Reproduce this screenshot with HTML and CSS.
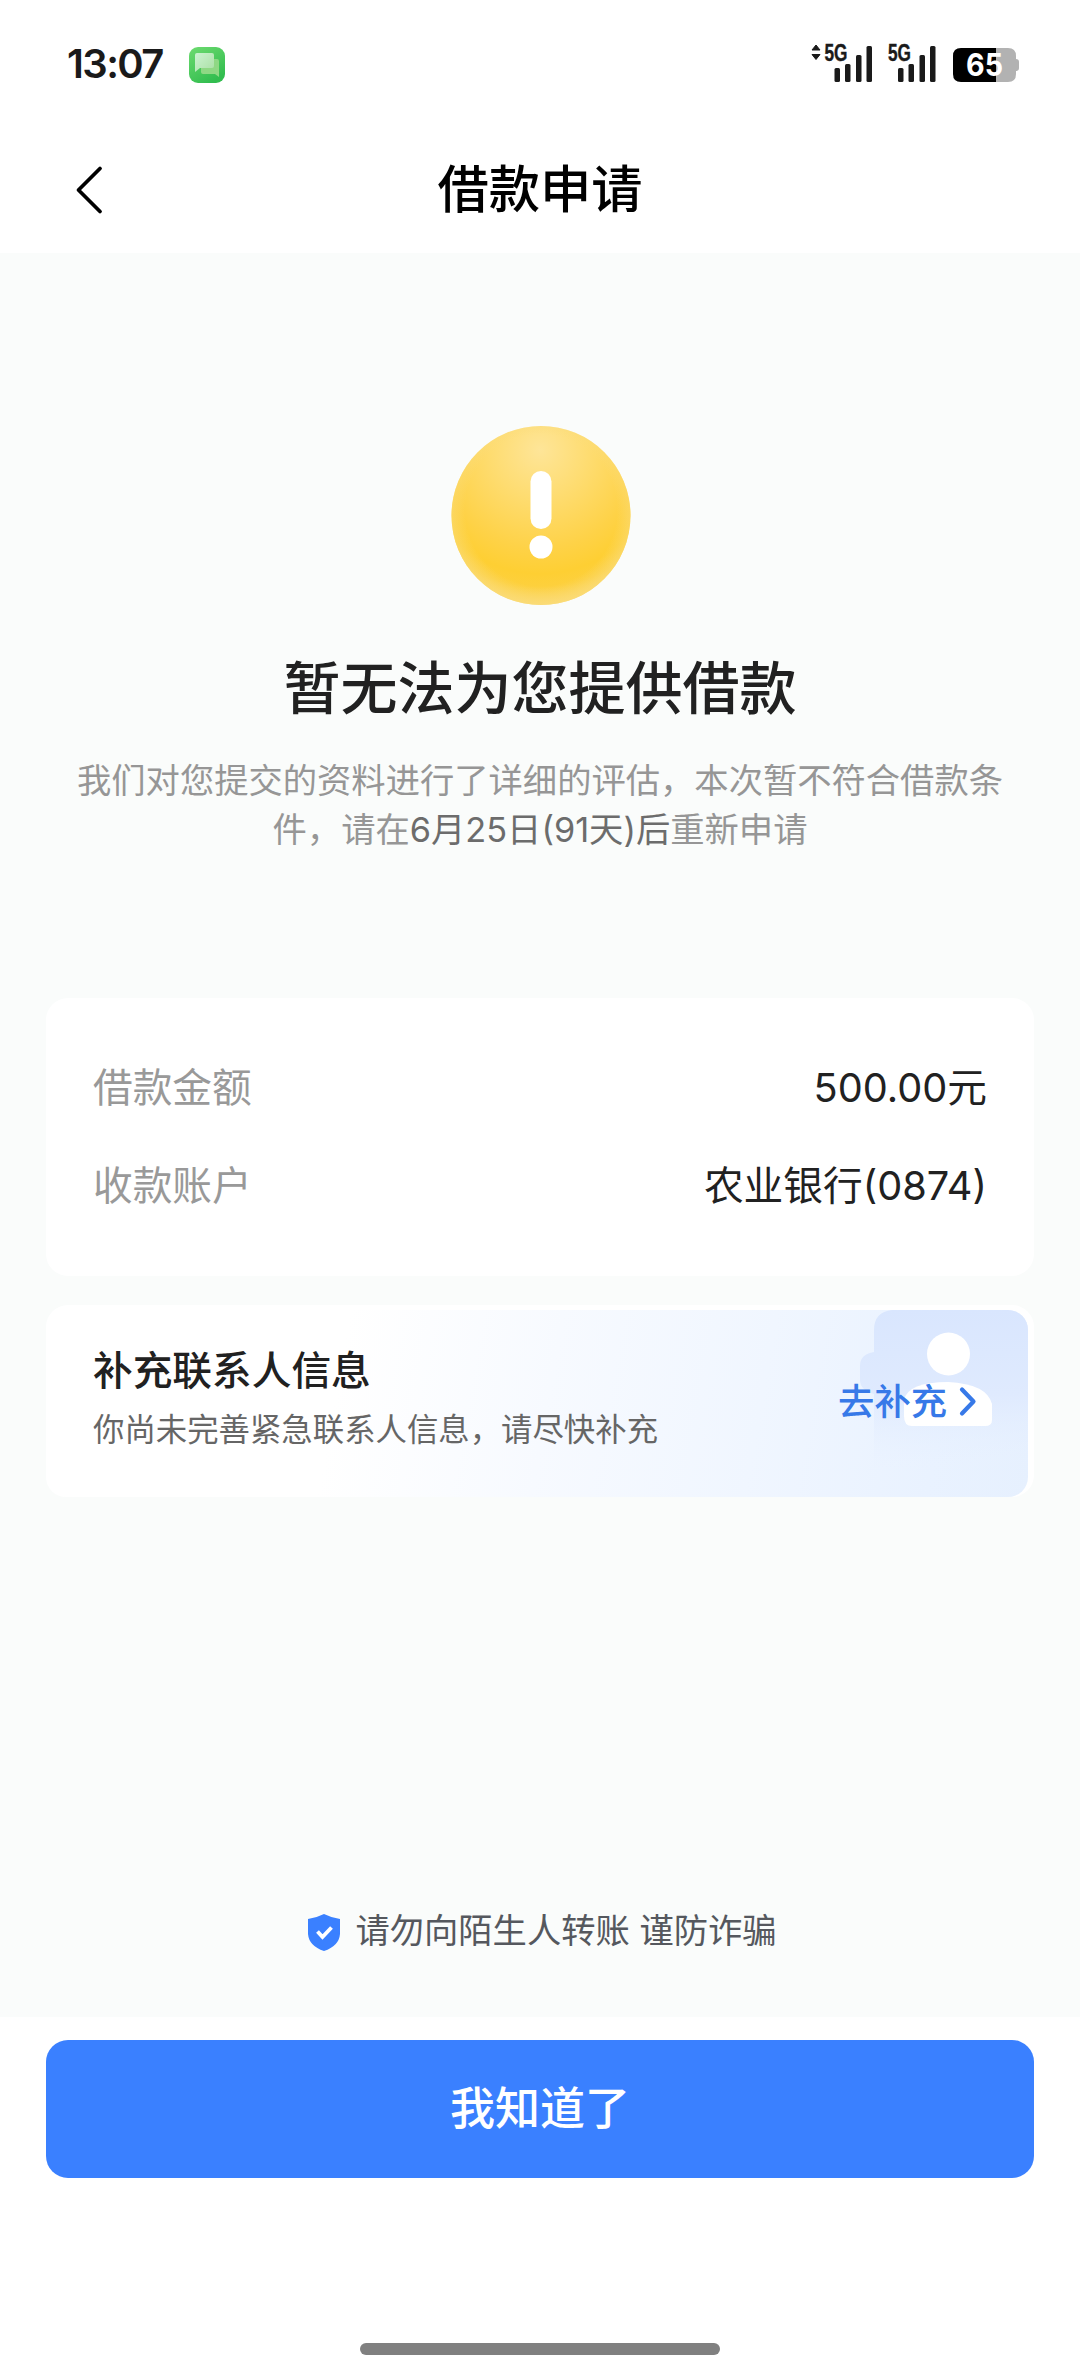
FILE: index.html
```html
<!DOCTYPE html>
<html lang="zh-CN">
<head>
<meta charset="UTF-8">
<title>借款申请</title>
<link rel="stylesheet" href="styles.css">
</head>
<body>
<div class="screen">
  <div class="statusbar">
    <span class="clock">13:07</span>
    <svg class="app-icon" width="36" height="36" viewBox="0 0 36 36">
      <defs>
        <linearGradient id="app" x1="0" y1="0" x2="0.6" y2="1"><stop offset="0" stop-color="#6edb70"/><stop offset="1" stop-color="#32bd4f"/></linearGradient>
        <linearGradient id="bubble" x1="0" y1="0" x2="1" y2="1"><stop offset="0" stop-color="#cdf3d2"/><stop offset="1" stop-color="#a9dfa4"/></linearGradient>
      </defs>
      <rect width="36" height="36" rx="9" fill="url(#app)"/>
      <path d="M12 12h16q2 0 2 2v16l-4-3H14q-2 0-2-2z" fill="#8fd884"/>
      <path d="M8 6h15q2 0 2 2v11q0 2-2 2H11l-5 4V8q0-2 2-2z" fill="url(#bubble)"/>
    </svg>
    <div class="status-right">
      <svg class="signal-a" width="62" height="48" viewBox="0 -10 62 48">
        <path d="M6 1l4 5H2zM6 15.500l4-5H2z" fill="#1a1a1a" stroke="#1a1a1a" stroke-linejoin="round"/>
        <text class="net" x="14.500" y="16.500" textLength="23" lengthAdjust="spacingAndGlyphs">5G</text>
        <g fill="#1a1a1a"><rect x="24.500" y="24" width="5.500" height="14" rx="1.500"/><rect x="35" y="20" width="5.500" height="18" rx="1.500"/><rect x="46" y="11" width="5.500" height="27" rx="1.500"/><rect x="56.500" y="2" width="5.500" height="36" rx="1.500"/></g>
      </svg>
      <svg class="signal-b" width="50" height="48" viewBox="0 -10 50 48">
        <text class="net" x="2" y="16.500" textLength="23" lengthAdjust="spacingAndGlyphs">5G</text>
        <g fill="#1a1a1a"><rect x="12" y="24" width="5.500" height="14" rx="1.500"/><rect x="22.500" y="20" width="5.500" height="18" rx="1.500"/><rect x="33.500" y="11" width="5.500" height="27" rx="1.500"/><rect x="44" y="2" width="5.500" height="36" rx="1.500"/></g>
      </svg>
      <svg class="battery" width="66" height="44" viewBox="0 -5 66 44">
        <path d="M8 0h35v34H8q-8 0-8-8V8q0-8 8-8z" fill="#000"/>
        <path d="M43 0h12q8 0 8 8v3q3 0 3 3v6q0 3-3 3v3q0 8-8 8H43z" fill="#b2b2b2"/>
        <text class="level" x="13" y="28" textLength="37" lengthAdjust="spacingAndGlyphs">65</text>
      </svg>
    </div>
  </div>

  <div class="navbar">
    <svg class="back" width="28" height="50" viewBox="0 0 28 50"><path d="M25 3.500L3.500 25 25 46.500" fill="none" stroke="#000" stroke-width="3.800" stroke-linecap="round" stroke-linejoin="round"/></svg>
    <h1 class="nav-title">借款申请</h1>
  </div>

  <div class="content">
    <svg class="warn" width="180" height="180" viewBox="0 0 180 180">
      <defs>
        <radialGradient id="gold" gradientUnits="userSpaceOnUse" cx="89" cy="24" r="165">
          <stop offset="0" stop-color="#fee598"/><stop offset="0.300" stop-color="#fedc70"/><stop offset="0.600" stop-color="#fed247"/><stop offset="0.750" stop-color="#fecf33"/><stop offset="0.830" stop-color="#fdd03d"/><stop offset="0.960" stop-color="#fbda70"/>
        </radialGradient>
        <radialGradient id="rim" cx="0.500" cy="0.470" r="0.530"><stop offset="0.800" stop-color="#fadc7c" stop-opacity="0"/><stop offset="1" stop-color="#fadc7c" stop-opacity="0.750"/></radialGradient>
      </defs>
      <circle cx="90" cy="89.500" r="89.500" fill="url(#gold)"/>
      <circle cx="90" cy="89.500" r="89.500" fill="url(#rim)"/>
      <rect x="79.500" y="45" width="21" height="58" rx="10.500" fill="#fff"/>
      <circle cx="90" cy="121" r="11.500" fill="#fff"/>
    </svg>
    <h2 class="headline">暂无法为您提供借款</h2>
    <p class="desc">我们对您提交的资料进行了详细的评估，本次暂不符合借款条<br>件，请在<span class="date">6月25日(91天)后</span>重新申请</p>

    <div class="card details">
      <div class="row"><span class="label">借款金额</span><span class="value">500.00元</span></div>
      <div class="row"><span class="label">收款账户</span><span class="value account">农业银行(0874)</span></div>
    </div>

    <div class="card contact">
      <div class="contact-bg">
        <svg width="982" height="187" viewBox="0 0 982 187">
          <defs>
            <linearGradient id="person" x1="0" y1="0" x2="0" y2="1"><stop offset="0" stop-color="#d9e6fe"/><stop offset="0.450" stop-color="#dfeafe"/><stop offset="0.850" stop-color="#e8f1ff" stop-opacity="0"/></linearGradient>
          </defs>
          <path d="M982 0H846q-18 2-18 20v22q-14 2-14 14v14q0 10 14 14v103h154z" fill="url(#person)"/>
          <circle cx="902.500" cy="44" r="21.500" fill="#fff"/>
          <path d="M858 106V90Q862 72 902 72Q941 74 946 94V110Q946 116 939 116H866Q858 116 858 106Z" fill="#fff"/>
        </svg>
      </div>
      <div class="contact-text">
        <div class="contact-title">补充联系人信息</div>
        <div class="contact-sub">你尚未完善紧急联系人信息，请尽快补充</div>
      </div>
      <div class="action">
        <span>去补充</span>
        <svg width="20" height="32" viewBox="0 0 20 32"><path d="M4 4.500L15.500 16.500 4 28.500" fill="none" stroke="#3779e8" stroke-width="4.200" stroke-linecap="round" stroke-linejoin="round"/></svg>
      </div>
    </div>

    <div class="safety">
      <svg width="34" height="39" viewBox="0 0 34 39"><path d="M17 1Q25 5 33 6V21Q32 33 17 38Q2 33 1 21V6Q9 5 17 1Z" fill="#3a80ff"/><path d="M10.500 18.500l5 5.500 9-9.500" fill="none" stroke="#fff" stroke-width="3.800"/></svg>
      <span>请勿向陌生人转账 谨防诈骗</span>
    </div>
  </div>

  <div class="footer">
    <button class="confirm">我知道了</button>
    <div class="home-bar"></div>
  </div>
</div>
</body>
</html>
```
FILE: styles.css
```css
* { box-sizing: border-box; }
body {
  margin: 0;
  background: #fff;
  font-family: Inter, "Noto Sans CJK SC", sans-serif;
  color: #212121;
}
h1, h2, p { margin: 0; }
svg { display: block; flex: none; }
.screen {
  width: 1080px;
  height: 2376px;
  display: flex;
  flex-direction: column;
  background: #fff;
}
.statusbar {
  height: 127px;
  padding: 0 61px 0 67px;
  display: flex;
  align-items: center;
}
.clock {
  font-size: 40px;
  font-weight: 600;
  line-height: 48px;
  letter-spacing: -1.6px;
  color: #1a1a1a;
  width: 122px;
}
.app-icon { margin-top: 3px; }
.status-right {
  margin: -11px 0 0 auto;
  display: flex;
  align-items: flex-end;
}
.signal-b { margin: 0 17px 0 14px; }
.battery { margin-bottom: -5px; }
.net { font: 700 23px "Liberation Sans", sans-serif; fill: #1a1a1a; stroke: #1a1a1a; stroke-width: 0.4px; }
.level { font: 700 31px Inter, sans-serif; fill: #fff; }
.navbar {
  height: 126px;
  padding-left: 75px;
  display: grid;
  grid-template-columns: 28px 1fr 103px;
  align-items: center;
}
.nav-title {
  margin-top: -2px;
  font-size: 51.3px;
  font-weight: 500;
  line-height: 60px;
  color: #000;
  text-align: center;
}
.content {
  height: 1764px;
  padding: 173px 46px 0;
  background: #fafcfb;
  display: flex;
  flex-direction: column;
}
.warn { align-self: center; margin-left: 2px; }
.headline {
  margin-top: 47px;
  font-size: 57px;
  font-weight: 500;
  line-height: 72px;
  text-align: center;
}
.desc {
  margin-top: 31px;
  font-size: 34.3px;
  line-height: 49px;
  color: #969696;
  text-align: center;
  white-space: nowrap;
}
.date { color: #6c6c6c; }
.card { background: #fff; border-radius: 22px; }
.details {
  margin-top: 144px;
  height: 278px;
  padding: 37px 47px 0;
}
.row {
  height: 98px;
  display: flex;
  justify-content: space-between;
  align-items: center;
  font-size: 39.7px;
}
.label { color: #999; }
.contact {
  position: relative;
  margin-top: 29px;
  height: 192px;
  padding: 0 56px 0 47px;
  display: flex;
  justify-content: space-between;
}
.contact-bg {
  position: absolute;
  left: 0;
  top: 5px;
  width: 982px;
  height: 187px;
  border-radius: 20px;
  overflow: hidden;
  background: linear-gradient(100deg, #fff 30%, #f7faff 51%, #f0f6ff 72%, #e9f2ff 90%, #e6f0fe 100%);
}
.contact-text { position: relative; padding-top: 42px; }
.contact-title { font-size: 39.7px; font-weight: 500; line-height: 48px; }
.contact-sub { margin-top: 15px; font-size: 31.4px; line-height: 40px; color: #666; }
.action {
  position: relative;
  height: 188px;
  display: flex;
  align-items: center;
  gap: 11px;
  font-size: 36.3px;
  font-weight: 500;
  color: #3779e8;
}
.action svg { margin-top: 3px; }
.safety {
  margin-top: 410px;
  padding-left: 4px;
  height: 48px;
  display: flex;
  justify-content: center;
  align-items: center;
  gap: 14px;
  font-size: 34.3px;
  line-height: 40px;
  color: #55585e;
}
.safety svg { margin-top: 3px; }
.footer {
  flex: 1;
  padding: 23px 46px 21px;
  display: flex;
  flex-direction: column;
  justify-content: space-between;
}
.confirm {
  height: 138px;
  border: 0;
  border-radius: 22px;
  background: #3a80ff;
  color: #fff;
  font: 500 45px/60px Inter, "Noto Sans CJK SC", sans-serif;
}
.home-bar {
  align-self: center;
  width: 360px;
  height: 12px;
  border-radius: 6px;
  background: #808080;
}
```
